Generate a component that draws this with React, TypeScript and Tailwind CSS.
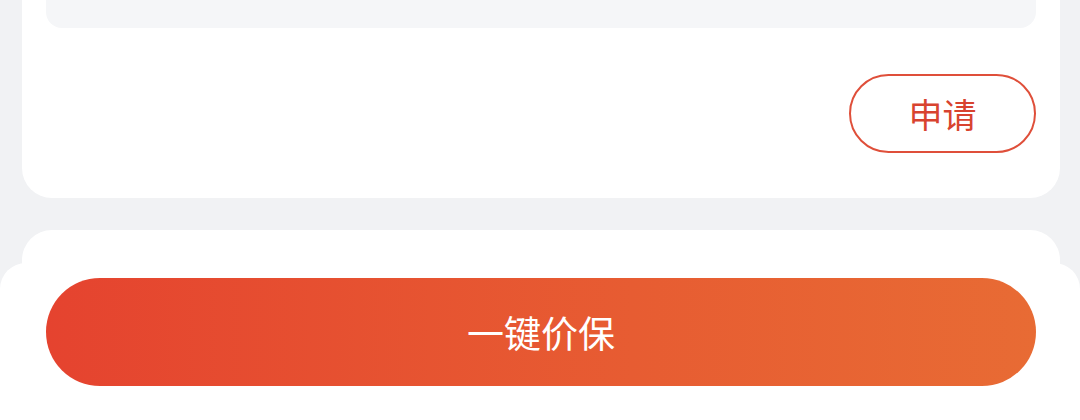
export default function App() {
  return (
    <div
      className="relative h-[420px] w-[1080px] overflow-hidden bg-[#f1f2f4]"
      style={{ fontFamily: '"Noto Sans CJK SC", "Noto Sans", sans-serif' }}
    >
      <div className="ml-[22px] mr-[20px] h-[198px] rounded-b-[30px] bg-white pl-[24px] pr-[24px]">
        <div className="h-[28px] rounded-b-[16px] bg-[#f5f6f8]" />
        <div className="mt-[46px] flex justify-end">
          <button className="flex h-[79px] w-[187px] items-center justify-center rounded-full border-2 border-[#df4f3a] text-[34px] leading-none text-[#d8432f]">
            申请
          </button>
        </div>
      </div>
      <div className="ml-[22px] mr-[20px] mt-[32px] h-[200px] rounded-t-[30px] bg-white" />
      <div className="absolute inset-x-0 bottom-0 top-[263px] rounded-t-[26px] bg-white pl-[46px] pr-[44px] pt-[15px]">
        <button className="flex h-[108px] w-full items-center justify-center rounded-full bg-gradient-to-r from-[#e5432f] to-[#e86b34] text-[37px] leading-none text-white">
          一键价保
        </button>
      </div>
    </div>
  );
}
